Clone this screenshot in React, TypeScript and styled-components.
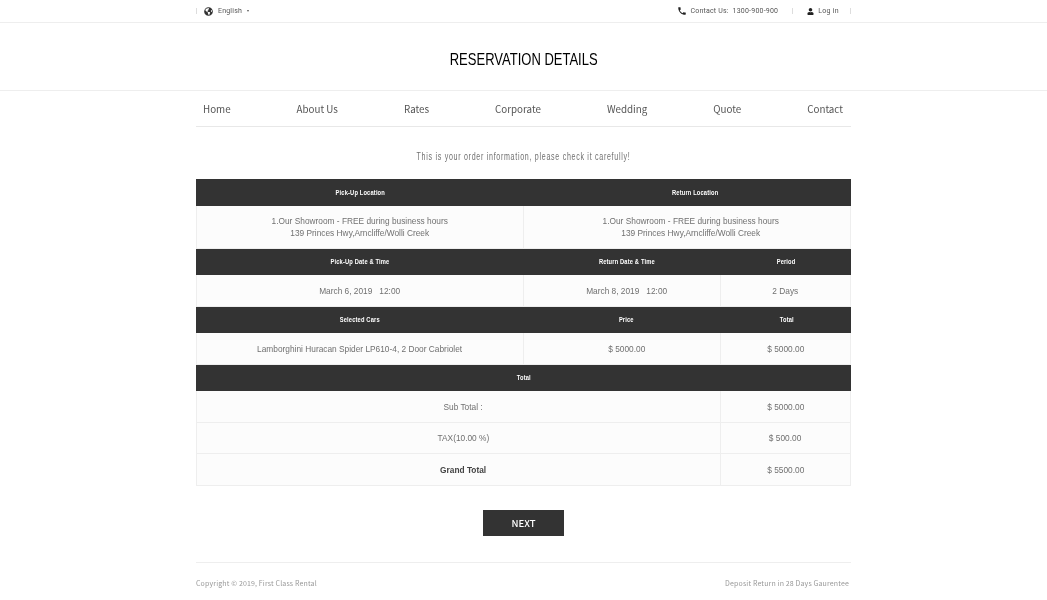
import { FC } from "react";
import styled, { createGlobalStyle } from "styled-components";
import { FaGlobeAmericas, FaUser } from "react-icons/fa";
import { MdPhone } from "react-icons/md";

const GlobalStyle = createGlobalStyle`
  html, body { margin: 0; padding: 0; background: #fff; }
  body { font-family: Roboto, "Liberation Sans", Arial, sans-serif; color: #666; }
  #root { will-change: transform; }
`;

const navItems = ["Home", "About Us", "Rates", "Corporate", "Wedding", "Quote", "Contact"];

const App: FC = () => {
  return (
    <>
      <GlobalStyle />
      <TopBar>
        <TopInner>
          <TopGroup>
            <TopDivider />
            <GlobeIcon />
            <TopText>English</TopText>
            <Caret />
          </TopGroup>
          <TopGroup>
            <PhoneIcon />
            <TopText>Contact Us: &nbsp;1300-900-900</TopText>
            <TopDivider $gap={14} />
            <UserIcon />
            <LoginText>Log in</LoginText>
            <TopDivider $gap={11} />
          </TopGroup>
        </TopInner>
      </TopBar>
      <TitleBand>
        <Title>RESERVATION DETAILS</Title>
      </TitleBand>
      <Page>
        <Nav>
          {navItems.map((item) => (
            <NavLink key={item}>{item}</NavLink>
          ))}
        </Nav>
        <Intro>This is your order information, please check it carefully!</Intro>
        <Table>
          <colgroup>
            <ColLeft />
            <ColMid />
            <ColRight />
          </colgroup>
          <tbody>
            <HeadRow>
              <HeadCell><HeadLabel>Pick-Up Location</HeadLabel></HeadCell>
              <HeadCell colSpan={2} $shift={16}><HeadLabel>Return Location</HeadLabel></HeadCell>
            </HeadRow>
            <TallRow>
              <Cell>
                <CellText>
                  1.Our Showroom - FREE during business hours
                  <br />
                  139 Princes Hwy,Arncliffe/Wolli Creek
                </CellText>
              </Cell>
              <Cell colSpan={2} $shift={8}>
                <CellText>
                  1.Our Showroom - FREE during business hours
                  <br />
                  139 Princes Hwy,Arncliffe/Wolli Creek
                </CellText>
              </Cell>
            </TallRow>
            <HeadRow>
              <HeadCell><HeadLabel>Pick-Up Date &amp; Time</HeadLabel></HeadCell>
              <HeadCell $shift={9}><HeadLabel>Return Date &amp; Time</HeadLabel></HeadCell>
              <HeadCell $shift={2}><HeadLabel>Period</HeadLabel></HeadCell>
            </HeadRow>
            <Row>
              <Cell><CellText>March 6, 2019 &nbsp; 12:00</CellText></Cell>
              <Cell $shift={9}><CellText>March 8, 2019 &nbsp; 12:00</CellText></Cell>
              <Cell><CellText>2 Days</CellText></Cell>
            </Row>
            <HeadRow>
              <HeadCell><HeadLabel>Selected Cars</HeadLabel></HeadCell>
              <HeadCell $shift={9}><HeadLabel>Price</HeadLabel></HeadCell>
              <HeadCell $shift={2}><HeadLabel>Total</HeadLabel></HeadCell>
            </HeadRow>
            <Row>
              <Cell><CellText>Lamborghini Huracan Spider LP610-4, 2 Door Cabriolet</CellText></Cell>
              <Cell $shift={9}><CellText>$ 5000.00</CellText></Cell>
              <Cell><CellText>$ 5000.00</CellText></Cell>
            </Row>
            <HeadRow>
              <HeadCell colSpan={3}><HeadLabel>Total</HeadLabel></HeadCell>
            </HeadRow>
            <Row>
              <Cell colSpan={2} $shift={10}><CellText>Sub Total :</CellText></Cell>
              <Cell><CellText>$ 5000.00</CellText></Cell>
            </Row>
            <ShortRow>
              <Cell colSpan={2} $shift={10}><CellText>TAX(10.00 %)</CellText></Cell>
              <Cell><CellText>$ 500.00</CellText></Cell>
            </ShortRow>
            <Row>
              <Cell colSpan={2} $shift={10} $strong>
                <CellText>Grand Total</CellText>
              </Cell>
              <Cell><CellText>$ 5500.00</CellText></Cell>
            </Row>
          </tbody>
        </Table>
        <ButtonRow>
          <NextButton>NEXT</NextButton>
        </ButtonRow>
        <Footer>
          <FooterText>Copyright © 2019, First Class Rental</FooterText>
          <FooterText>Deposit Return in 28 Days Gaurentee</FooterText>
        </Footer>
      </Page>
    </>
  );
};

export default App;

const TopBar = styled.div({
  height: "22px",
  borderBottom: "1px solid #eee",
});
const TopInner = styled.div({
  width: "655px",
  height: "100%",
  margin: "0 auto",
  display: "flex",
  justifyContent: "space-between",
  alignItems: "center",
});
const TopGroup = styled.div({
  display: "flex",
  alignItems: "center",
});
const TopDivider = styled.span<{ $gap?: number }>(({ $gap }) => ({
  width: "1px",
  height: "6px",
  background: "#ddd",
  marginLeft: $gap ? `${$gap}px` : 0,
}));
const GlobeIcon = styled(FaGlobeAmericas)({
  width: "9px",
  height: "9px",
  color: "#333",
  marginLeft: "7px",
  marginRight: "5px",
});
const PhoneIcon = styled(MdPhone)({
  width: "10px",
  height: "10px",
  color: "#222",
  marginRight: "3px",
});
const UserIcon = styled(FaUser)({
  width: "7px",
  height: "7px",
  color: "#222",
  marginLeft: "14px",
  marginRight: "4px",
});
const TopText = styled.span({
  fontSize: "7px",
  color: "#555",
  letterSpacing: "0.2px",
});
const LoginText = styled(TopText)({
  letterSpacing: "0.3px",
});
const Caret = styled.span({
  width: 0,
  height: 0,
  marginLeft: "5px",
  borderLeft: "1.5px solid transparent",
  borderRight: "1.5px solid transparent",
  borderTop: "2px solid #555",
});
const TitleBand = styled.div({
  height: "68px",
  paddingTop: "6px",
  boxSizing: "border-box",
  borderBottom: "1px solid #eee",
  display: "flex",
  alignItems: "center",
  justifyContent: "center",
});
const Title = styled.h1({
  margin: 0,
  fontFamily: '"Liberation Sans", sans-serif',
  fontSize: "17px",
  fontWeight: 400,
  color: "#000",
  transform: "scaleX(0.765)",
});
const Page = styled.div({
  width: "655px",
  margin: "0 auto",
});
const Nav = styled.nav({
  height: "35px",
  padding: "0 8px 0 7px",
  borderBottom: "1px solid #e8e8e8",
  display: "flex",
  justifyContent: "space-between",
  alignItems: "center",
});
const NavLink = styled.a({
  fontFamily: '"Noto Sans CJK SC", "Noto Sans", sans-serif',
  fontSize: "9.8px",
  color: "#555",
});
const Intro = styled.p({
  margin: "0",
  padding: "24px 0 16px",
  height: "12px",
  lineHeight: "12px",
  textAlign: "center",
  fontFamily: '"Liberation Sans", sans-serif',
  fontSize: "10px",
  color: "#707070",
  letterSpacing: "1px",
  transform: "scaleX(0.708)",
});
const Table = styled.table({
  width: "654px",
  tableLayout: "fixed",
  borderCollapse: "collapse",
});
const ColLeft = styled.col({ width: "327px" });
const ColMid = styled.col({ width: "197px" });
const ColRight = styled.col({ width: "130px" });
const HeadRow = styled.tr({ height: "26px" });
const Row = styled.tr({ height: "32px" });
const ShortRow = styled.tr({ height: "31px" });
const TallRow = styled.tr({ height: "43px" });
const HeadCell = styled.th<{ $shift?: number }>(({ $shift }) => ({
  padding: `0 0 0 ${$shift || 0}px`,
  background: "#333",
  border: "1px solid #333",
  color: "#fff",
  textAlign: "center",
  fontFamily: '"Liberation Sans", sans-serif',
  fontSize: "8px",
  fontWeight: 700,
  letterSpacing: "0.2px",
}));
const HeadLabel = styled.span({
  display: "inline-block",
  transform: "scaleX(0.72)",
});
const Cell = styled.td<{ $strong?: boolean; $shift?: number }>(({ $strong, $shift }) => ({
  padding: `0 0 0 ${$shift || 0}px`,
  background: "#fcfcfc",
  border: "1px solid #eee",
  color: $strong ? "#444" : "#707070",
  fontFamily: '"Liberation Sans", sans-serif',
  fontWeight: $strong ? 700 : 400,
  textAlign: "center",
  fontSize: "9.8px",
  lineHeight: "12px",
}));
const CellText = styled.span({
  display: "inline-block",
  transform: "scaleX(0.85)",
});
const ButtonRow = styled.div({
  display: "flex",
  justifyContent: "center",
  paddingTop: "24px",
});
const NextButton = styled.button({
  width: "81px",
  height: "26px",
  padding: 0,
  border: "1px solid #333",
  background: "#333",
  color: "#fff",
  fontFamily: '"Noto Sans CJK SC", "Noto Sans", sans-serif',
  fontSize: "9.5px",
  fontWeight: 500,
});
const Footer = styled.footer({
  marginTop: "26px",
  paddingTop: "15px",
  borderTop: "1px solid #eee",
  display: "flex",
  justifyContent: "space-between",
  paddingRight: "2px",
});
const FooterText = styled.span({
  fontFamily: '"Noto Sans CJK SC", "Noto Sans", sans-serif',
  fontSize: "7px",
  color: "#999",
  letterSpacing: "0.15px",
});
